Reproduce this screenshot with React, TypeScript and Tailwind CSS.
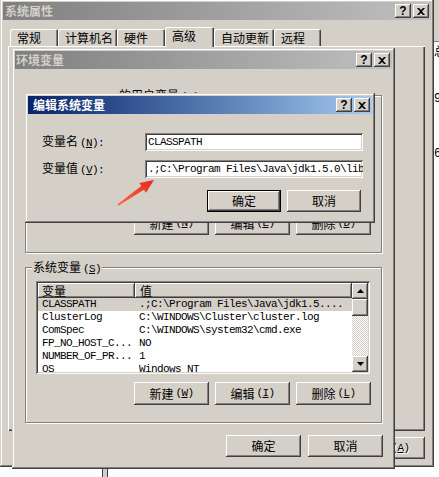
import React from "react";

const cjk = "font-['Noto_Sans_CJK_SC','Noto_Sans_CJK_JP',sans-serif]";
const mono = "font-['Liberation_Mono','DejaVu_Sans_Mono',monospace] text-[11px] tracking-[-0.6px]";
const frame =
  "shadow-[inset_-1px_-1px_#404040,inset_1px_1px_#d4d0c8,inset_-2px_-2px_#808080,inset_2px_2px_#ffffff]";
const raised =
  "shadow-[inset_-1px_-1px_#404040,inset_1px_1px_#ffffff,inset_-2px_-2px_#808080,inset_2px_2px_#d4d0c8]";
const defRaised =
  "shadow-[inset_0_0_0_1px_#000000,inset_-2px_-2px_#404040,inset_2px_2px_#ffffff,inset_-3px_-3px_#808080]";
const sunken =
  "shadow-[inset_1px_1px_#808080,inset_-1px_-1px_#ffffff,inset_2px_2px_#404040,inset_-2px_-2px_#d4d0c8]";
const etched = "border border-[#808080] shadow-[inset_1px_1px_#ffffff,1px_1px_#ffffff]";
const tabShadow = "shadow-[inset_1px_1px_#ffffff,inset_-1px_0_#404040,inset_-2px_0_#808080]";

function Acc({ k }: { k: string }) {
  return (
    <span className={`${mono} ml-[2px]`}>
      (<span className="underline">{k}</span>)
    </span>
  );
}

function Btn({
  children,
  className = "",
  isDefault = false,
}: {
  children: React.ReactNode;
  className?: string;
  isDefault?: boolean;
}) {
  return (
    <button
      type="button"
      className={`flex items-center justify-center bg-[#d4d0c8] text-[12px] leading-none text-black ${
        isDefault ? defRaised : raised
      } ${className}`}
    >
      {children}
    </button>
  );
}

function CaptionButtons() {
  return (
    <div className="flex gap-[2px]">
      <div className={`flex h-[14px] w-[16px] items-center justify-center bg-[#d4d0c8] ${raised}`}>
        <span className="font-['Liberation_Sans',sans-serif] text-[12px] font-bold leading-none text-black">?</span>
      </div>
      <div className={`flex h-[14px] w-[16px] items-center justify-center bg-[#d4d0c8] ${raised}`}>
        <svg width="8" height="7" viewBox="0 0 8 7">
          <path d="M0 0h2l2 2 2-2h2L5 3.5 8 7H6L4 5 2 7H0l3-3.5z" fill="#000" />
        </svg>
      </div>
    </div>
  );
}

function TitleBar({ title, active = false, pl }: { title: string; active?: boolean; pl: string }) {
  return (
    <div
      className={`flex h-[18px] shrink-0 items-center justify-between pr-[2px] ${pl} ${
        active
          ? "bg-linear-to-r from-[#0a246a] to-[#a6caf0] text-white"
          : "bg-linear-to-r from-[#808080] to-[#c0c0c0] text-[#d4d0c8]"
      }`}
    >
      <span className="text-[12px] font-bold leading-none">{title}</span>
      <CaptionButtons />
    </div>
  );
}

const tabs = [
  { label: "常规", w: "w-[48px]" },
  { label: "计算机名", w: "w-[59px]" },
  { label: "硬件", w: "w-[48px]" },
  { label: "高级", w: "w-[49px]", active: true },
  { label: "自动更新", w: "w-[60px]" },
  { label: "远程", w: "w-[47px]" },
];

const sysVars = [
  ["CLASSPATH", ".;C:\\Program Files\\Java\\jdk1.5...."],
  ["ClusterLog", "C:\\WINDOWS\\Cluster\\cluster.log"],
  ["ComSpec", "C:\\WINDOWS\\system32\\cmd.exe"],
  ["FP_NO_HOST_C...", "NO"],
  ["NUMBER_OF_PR...", "1"],
  ["OS", "Windows NT"],
];

function Arrow({ down = false }: { down?: boolean }) {
  return (
    <svg width="7" height="4" viewBox="0 0 7 4">
      <path d={down ? "M0 0h7L3.5 4z" : "M3.5 0L7 4H0z"} fill="#000" />
    </svg>
  );
}

export default function App() {
  return (
    <div className={`relative h-[477px] w-[439px] overflow-hidden bg-white ${cjk}`}>
      {/* window behind, right edge */}
      <div className="absolute left-[434px] top-0 flex h-full w-[5px] flex-col overflow-hidden">
        <div className="h-[42px] shrink-0 border-b border-[#808080] bg-[#d4d0c8]" />
        <span className="mt-[2px] text-[12px] leading-[14px]">总</span>
        <span className="mt-[34px] font-['Liberation_Mono',monospace] text-[12px] leading-[14px]">9</span>
        <span className="mt-[41px] font-['Liberation_Mono',monospace] text-[12px] leading-[14px]">6</span>
      </div>
      <div className="absolute left-[102px] top-[469px] h-[8px] w-[6px] border-x border-[#404040] bg-[#d4d0c8]" />

      {/* 系统属性 */}
      <div className={`absolute left-0 top-[-1px] flex h-[468px] w-[434px] flex-col bg-[#d4d0c8] p-[3px] ${frame}`}>
        <TitleBar title="系统属性" pl="pl-[2px]" />
        <div className="ml-[7px] mt-[7px] flex h-[19px] items-end">
          {tabs.map((t) => (
            <div
              key={t.label}
              className={`flex items-center rounded-t-[2px] bg-[#d4d0c8] pl-[7px] text-[12px] leading-none text-black ${tabShadow} ${t.w} ${
                t.active ? "relative z-10 mb-[-1px] h-[20px] pb-[3px]" : "h-[17px]"
              }`}
            >
              {t.label}
            </div>
          ))}
        </div>
        <div className="ml-[5px] mr-[6px] h-[385px] shadow-[inset_1px_1px_#ffffff,inset_-1px_-1px_#404040,inset_-2px_-2px_#808080]" />
        <div className="mr-[6px] mt-[6px] flex gap-[6px] self-end">
          <Btn className="h-[22px] w-[75px]">确定</Btn>
          <Btn className="h-[22px] w-[75px]">取消</Btn>
          <Btn className="h-[22px] w-[75px] text-[#808080] [text-shadow:1px_1px_#ffffff]">
            应用<span className={`${mono} ml-[2px]`}>(<span className="underline">A</span>)</span>
          </Btn>
        </div>
      </div>

      {/* 环境变量 */}
      <div className={`absolute left-[12px] top-[48px] flex h-[421px] w-[383px] flex-col bg-[#d4d0c8] p-[3px] ${frame}`}>
        <TitleBar title="环境变量" pl="pl-[1px]" />

        <div className={`relative mx-[10px] mt-[26px] flex h-[158px] flex-col items-end justify-end pb-[17px] pr-[10px] ${etched}`}>
          <span className="absolute left-[92px] top-[-8px] bg-[#d4d0c8] px-[1px] text-[12px] leading-[14px]">
            的用户变量<Acc k="U" />
          </span>
          <div className="flex gap-[6px]">
            <Btn className="h-[23px] w-[75px]">新建<Acc k="N" /></Btn>
            <Btn className="h-[23px] w-[75px]">编辑<Acc k="E" /></Btn>
            <Btn className="h-[23px] w-[75px]">删除<Acc k="D" /></Btn>
          </div>
        </div>

        <div className={`relative mx-[10px] mt-[14px] flex h-[156px] flex-col ${etched}`}>
          <span className="absolute left-[6px] top-[-8px] bg-[#d4d0c8] px-[1px] text-[12px] leading-[14px]">
            系统变量<Acc k="S" />
          </span>
          <div className={`ml-[10px] mt-[13px] flex h-[93px] w-[334px] bg-white p-[2px] ${sunken}`}>
            <div className="flex flex-1 flex-col overflow-hidden">
              <div className="flex h-[15px] shrink-0">
                <div className={`flex w-[97px] items-center bg-[#d4d0c8] pl-[4px] text-[12px] leading-none ${raised}`}>变量</div>
                <div className={`flex flex-1 items-center bg-[#d4d0c8] pl-[5px] text-[12px] leading-none ${raised}`}>值</div>
              </div>
              {sysVars.map(([name, value], i) => (
                <div
                  key={name}
                  className={`flex h-[13px] shrink-0 items-center whitespace-nowrap leading-none text-black ${mono} ${
                    i === 0 ? "bg-[#d4d0c8]" : ""
                  }`}
                >
                  <span className="w-[97px] pl-[4px]">{name}</span>
                  <span className="pl-[4px]">{value}</span>
                </div>
              ))}
            </div>
            <div className="flex w-[16px] flex-col">
              <div className={`flex h-[16px] items-center justify-center bg-[#d4d0c8] ${raised}`}>
                <Arrow />
              </div>
              <div className={`h-[17px] bg-[#d4d0c8] ${raised}`} />
              <div className="flex-1 bg-[repeating-conic-gradient(#ffffff_0_25%,#d4d0c8_0_50%)] bg-[length:2px_2px]" />
              <div className={`flex h-[16px] items-center justify-center bg-[#d4d0c8] ${raised}`}>
                <Arrow down />
              </div>
            </div>
          </div>
          <div className="mr-[10px] mt-[8px] flex gap-[6px] self-end">
            <Btn className="h-[23px] w-[75px]">新建<Acc k="W" /></Btn>
            <Btn className="h-[23px] w-[75px]">编辑<Acc k="I" /></Btn>
            <Btn className="h-[23px] w-[75px]">删除<Acc k="L" /></Btn>
          </div>
        </div>

        <div className="mr-[9px] mt-[12px] flex gap-[7px] self-end">
          <Btn className="h-[22px] w-[75px]">确定</Btn>
          <Btn className="h-[22px] w-[75px]">取消</Btn>
        </div>
      </div>

      {/* 编辑系统变量 */}
      <div className={`absolute left-[25px] top-[93px] flex h-[130px] w-[350px] flex-col bg-[#d4d0c8] p-[3px] ${frame}`}>
        <TitleBar title="编辑系统变量" active pl="pl-[5px]" />
        <div className="ml-[14px] mt-[19px] flex items-center">
          <span className="w-[103px] text-[12px] leading-none">
            变量名<Acc k="N" /><span className={mono}>:</span>
          </span>
          <div className={`flex h-[18px] w-[218px] items-center overflow-hidden whitespace-nowrap bg-white pl-[3px] ${sunken} ${mono}`}>
            CLASSPATH
          </div>
        </div>
        <div className="ml-[14px] mt-[9px] flex items-center">
          <span className="w-[103px] text-[12px] leading-none">
            变量值<Acc k="V" /><span className={mono}>:</span>
          </span>
          <div className={`flex h-[18px] w-[218px] items-center overflow-hidden whitespace-nowrap bg-white pl-[3px] ${sunken} ${mono}`}>
            {".;C:\\Program Files\\Java\\jdk1.5.0\\lib;%JAVA_HOME%\\lib\\tools.jar"}
          </div>
        </div>
        <div className="mr-[11px] mt-[12px] flex gap-[6px] self-end">
          <Btn isDefault className="h-[22px] w-[74px]">确定</Btn>
          <Btn className="h-[22px] w-[74px]">取消</Btn>
        </div>
      </div>

      {/* red arrow */}
      <svg className="absolute left-[114px] top-[176px]" width="44" height="34" viewBox="0 0 44 34">
        <defs>
          <linearGradient id="ar" x1="0" y1="1" x2="1" y2="0">
            <stop offset="0" stopColor="#ff6a4a" />
            <stop offset="1" stopColor="#e42a1c" />
          </linearGradient>
        </defs>
        <polygon points="3.5,28.3 27.3,10.1 25.2,7 40,4 32,16.8 29.9,13.7 4.5,29.7" fill="url(#ar)" />
      </svg>
    </div>
  );
}
